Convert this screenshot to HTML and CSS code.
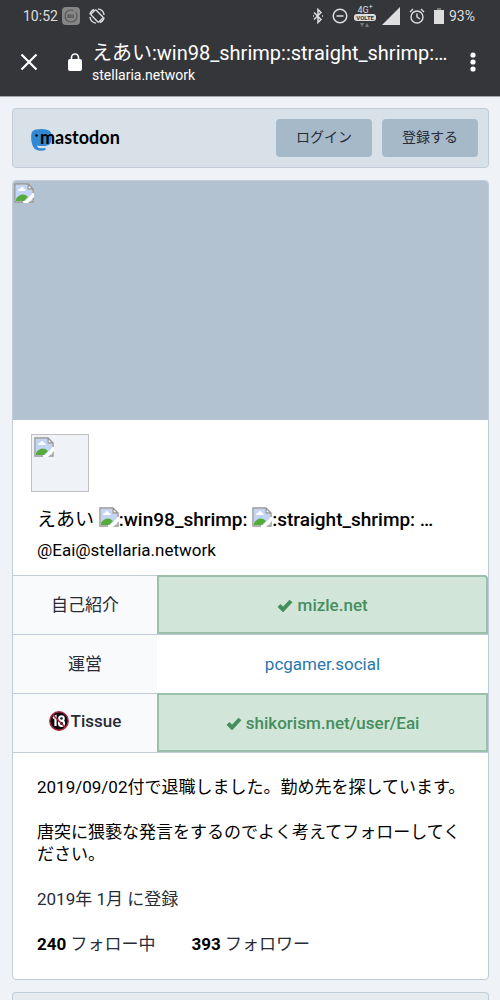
FILE: index.html
```html
<!DOCTYPE html>
<html lang="ja">
<head>
    <meta charset="UTF-8">
    <meta name="viewport" content="width=device-width, initial-scale=1.0">
    <title>えあい (@Eai@stellaria.network)</title>
    <link rel="stylesheet" href="styles.css">
</head>
<body>
    <!-- shared placeholder icon -->
    <svg class="defs" aria-hidden="true">
        <symbol id="broken" viewBox="0 0 20 20">
            <path d="M1 1h13l5 5v13H1z" fill="#fff"/>
            <path d="M2 2h11v5h5v4l-7 7H2z" fill="#c3d5f5"/>
            <path d="M4 8c0-2 2-2 2-2 1-3 4-2 4 0 2 0 2 2 1 2z" fill="#fff"/>
            <path d="M2 18v-2c3-5 8-6 12-2l-4 4z" fill="#55ab3b"/>
            <path d="M15 18l3-3v3z" fill="#c3d5f5"/>
            <path d="M9 19H1V1h13l5 5v4M14 1v5h5M14 19h5v-5" fill="none" stroke="#969696" stroke-width="1.4"/>
            <path d="M9 20L20 10v4l-6 6z" fill="#fff"/>
        </symbol>
        <symbol id="check" viewBox="0 0 16 14">
            <path d="M2 7.5l4 4L14 3" fill="none" stroke="currentColor" stroke-width="4"/>
        </symbol>
    </svg>

    <div class="browser">
        <div class="status">
            <span>10:52</span>
            <svg class="app-icon" width="18" height="18" viewBox="0 0 18 18">
                <rect width="18" height="18" rx="4" fill="#858585"/>
                <circle cx="9" cy="9" r="6" fill="none" stroke="#5a5a5a" stroke-width="1.2" stroke-dasharray="30 3"/>
                <path d="M6 11V8h3v3M7.500 11V9.500M11 7.500V11" fill="none" stroke="#505050" stroke-width="1.2"/>
            </svg>
            <svg class="rotate" width="16" height="16" viewBox="0 0 16 16" fill="none" stroke="#dedede" stroke-width="1.4">
                <rect x="4.500" y="2.500" width="7" height="11" rx="1" transform="rotate(-45 8 8)"/>
                <path d="M9 .9A7.200 7.200 0 0 1 15.100 7M7 15.100A7.200 7.200 0 0 1 .9 9M.9 6.500A7.200 7.200 0 0 1 5 1.500M15.100 9.500a7.200 7.200 0 0 1-4.100 5"/>
            </svg>
            <div class="status-right">
                <svg width="10" height="16" viewBox="0 0 10 16" fill="none" stroke="#dedede" stroke-width="1.500">
                    <path d="M1 4.500l7 7L5 14.500v-13l3 3-7 7"/><path d="M0 8h1M9 8h1"/>
                </svg>
                <svg width="16" height="16" viewBox="0 0 16 16" fill="none" stroke="#dedede" stroke-width="1.500">
                    <circle cx="8" cy="8" r="6.800"/><path d="M4.500 8h7"/>
                </svg>
                <div class="volte">
                    <span class="net">4G<sup>+</sup></span>
                    <span class="pill">VOLTE</span>
                    <svg width="10" height="4" viewBox="0 0 10 4" fill="#777"><path d="M0 0h4L2 4zM5 4h4L7 0z"/></svg>
                </div>
                <svg width="18" height="18" viewBox="0 0 18 18"><path d="M18 0v18H0z" fill="#dedede"/></svg>
                <svg class="alarm" width="16" height="16" viewBox="0 0 16 16" fill="none" stroke="#dedede" stroke-width="1.400">
                    <circle cx="8" cy="9" r="6"/><path d="M8 5.500V9l3 2M1 4l3-3M15 4l-3-3"/>
                </svg>
                <svg width="10" height="16" viewBox="0 0 10 16"><path d="M3 0h4v2H3z" fill="#777"/><path d="M0 2h10v14H0z" fill="#dedede"/></svg>
                <span class="battery">93%</span>
            </div>
        </div>
        <div class="toolbar">
            <button class="icon-btn" aria-label="閉じる">
                <svg width="18" height="18" viewBox="0 0 18 18"><path d="M1.500 1.500l15 15M16.500 1.500l-15 15" stroke="#fff" stroke-width="2.200"/></svg>
            </button>
            <svg class="lock" width="14" height="18" viewBox="0 0 14 18">
                <rect y="6" width="14" height="12" rx="2" fill="#fff"/>
                <path d="M3.500 7V4.500a3.500 3.500 0 0 1 7 0V7" fill="none" stroke="#fff" stroke-width="1.600"/>
            </svg>
            <div class="address">
                <div class="page-title">えあい:win98_shrimp::straight_shrimp:…</div>
                <div class="host">stellaria.network</div>
            </div>
            <button class="icon-btn" aria-label="メニュー">
                <svg width="6" height="20" viewBox="0 0 6 20" fill="#fff"><circle cx="3" cy="3" r="2.600"/><circle cx="3" cy="10" r="2.600"/><circle cx="3" cy="17" r="2.600"/></svg>
            </button>
        </div>
    </div>

    <div class="container">
        <header class="header">
            <a class="brand" href="#">
                <svg width="21" height="22" viewBox="0 0 21 22">
                    <path d="M5 .6C9-.1 13-.1 16 .7c3 .8 4.500 3 4.500 5.300 0 5 0 8-2 9.500-2.500 1.700-7 2-12 1.200 0 2.300 3 3.300 8 2.200v2C10 22.500 4 22 2 17.500 0 13 0 9 .3 5.500.5 2.500 2.500 1 5 .6z" fill="#3088d4"/>
                    <path d="M6 16.500c3 1.600 6 1.400 9 .5-1.500 2-3.500 2-5.500 2S6.200 18.500 6 16.500z" fill="#d9e1e8"/>
                    <circle cx="5.500" cy="6.500" r="1.200" fill="#000"/>
                </svg>
                <span>mastodon</span>
            </a>
            <nav class="nav">
                <a class="nav-button" href="#">ログイン</a>
                <a class="nav-button" href="#">登録する</a>
            </nav>
        </header>

        <main class="card">
            <div class="cover">
                <svg width="20" height="20"><use href="#broken"/></svg>
            </div>
            <div class="profile">
                <div class="avatar">
                    <svg width="20" height="20"><use href="#broken"/></svg>
                </div>
                <h1 class="name"><span>えあい</span> <svg width="20" height="20"><use href="#broken"/></svg>:win98_shrimp: <svg width="20" height="20"><use href="#broken"/></svg>:straight_shrimp: …</h1>
                <div class="handle">@Eai@stellaria.network</div>
            </div>
            <table class="fields">
                <tr>
                    <th scope="row">自己紹介</th>
                    <td class="verified"><a href="#"><svg width="16" height="14"><use href="#check"/></svg> mizle.net</a></td>
                </tr>
                <tr>
                    <th scope="row">運営</th>
                    <td><a href="#">pcgamer.social</a></td>
                </tr>
                <tr>
                    <th scope="row"><span class="adult"><svg width="20" height="20" viewBox="0 0 20 20">
                        <circle cx="10" cy="10" r="9.200" fill="#0b0b0f" stroke="#a8283c" stroke-width="1.400"/>
                        <path d="M4 7l2.500-1.500V15" fill="none" stroke="#fff" stroke-width="2.200"/>
                        <circle cx="12.500" cy="7.500" r="2.300" fill="none" stroke="#fff" stroke-width="2"/>
                        <circle cx="12.500" cy="12.300" r="2.600" fill="none" stroke="#fff" stroke-width="2"/>
                        <path d="M3.500 3.500l13 13" stroke="#a8283c" stroke-width="1.500"/>
                    </svg>Tissue</span></th>
                    <td class="verified"><a href="#"><svg width="16" height="14"><use href="#check"/></svg> shikorism.net/user/Eai</a></td>
                </tr>
            </table>
            <div class="bio">
                <p>2019/09/02付で退職しました。勤め先を探しています。</p>
                <p>唐突に猥褻な発言をするのでよく考えてフォローしてください。</p>
                <p class="joined">2019年 1月 に登録</p>
                <div class="counts">
                    <a href="#"><strong>240</strong> フォロー中</a>
                    <a href="#"><strong>393</strong> フォロワー</a>
                </div>
            </div>
        </main>

        <div class="next-card"></div>
    </div>
</body>
</html>
```

FILE: styles.css
```css
* {
    box-sizing: border-box;
}
body {
    margin: 0;
    background: #eff3f7;
    color: #000;
    font-family: Roboto, "Noto Sans CJK JP", sans-serif;
    font-size: 17px;
    line-height: 22px;
}
a {
    color: inherit;
    text-decoration: none;
}
svg {
    flex: none;
}
.defs {
    position: absolute;
    width: 0;
    height: 0;
}

/* browser bars */
.browser {
    background: #35363a;
    color: #fff;
    border-bottom: 1px solid #a5a6a9;
}
.status {
    display: flex;
    align-items: center;
    height: 32px;
    padding: 0 25px 0 23px;
    color: #dedede;
    font-size: 14px;
}
.app-icon {
    margin-left: 4px;
}
.rotate {
    margin-left: 9px;
}
.status-right {
    display: flex;
    align-items: center;
    gap: 9px;
    margin-left: auto;
}
.volte {
    display: flex;
    flex-direction: column;
    align-items: center;
    margin: 0 -3px;
}
.net {
    font-size: 9px;
    line-height: 8px;
}
.net sup {
    font-size: 7px;
    line-height: 0;
}
.pill {
    margin-bottom: 2px;
    padding: 0 2px;
    border-radius: 3px;
    background: #dedede;
    color: #35363a;
    font-size: 6px;
    font-weight: 700;
    line-height: 7px;
}
.battery {
    margin-left: -4px;
}
.toolbar {
    display: flex;
    align-items: center;
    height: 64px;
    padding: 0 24px 4px 20px;
}
.icon-btn {
    display: flex;
    padding: 0;
    border: none;
    background: none;
}
.lock {
    margin: 0 10px 0 30px;
}
.address {
    flex: 1;
    min-width: 0;
}
.page-title {
    font-size: 20px;
    line-height: 26px;
    white-space: nowrap;
}
.host {
    font-size: 14px;
    line-height: 18px;
}

/* page */
.container {
    padding: 11px 11px 0 12px;
}
.header {
    display: flex;
    align-items: center;
    justify-content: space-between;
    height: 60px;
    padding: 0 10px 0 18px;
    border: 1px solid #c0cdd9;
    border-radius: 4px;
    background: #d9e1e8;
}
.brand {
    display: flex;
    align-items: center;
    font-family: Lato, sans-serif;
    font-size: 18px;
    font-weight: 700;
}
.brand svg {
    margin: 4px -12px 0 0;
}
.brand span {
    position: relative;
    padding-bottom: 2px;
}
.nav {
    display: flex;
    gap: 10px;
}
.nav-button {
    width: 96px;
    padding: 7px 0 9px;
    border-radius: 4px;
    background: #a6b9c9;
    color: #282c37;
    font-size: 14px;
    text-align: center;
}
.card {
    margin-top: 12px;
    border: 1px solid #c0cdd9;
    border-radius: 4px;
    background: #fff;
    overflow: hidden;
}
.cover {
    height: 239px;
    padding: 2px 1px;
    border-bottom: 1px solid #b8c2ca;
    background: #b2c2d1;
}
.profile {
    padding: 14px 18px;
}
.avatar {
    width: 58px;
    height: 58px;
    padding: 2px;
    border: 1px solid #c0c0c0;
    background: #eff3f7;
}
.avatar svg, .cover svg {
    display: block;
}
.name {
    margin: 14px 0 0;
    padding: 0 6px;
    font-size: 19px;
    font-weight: 500;
    line-height: 27px;
    white-space: nowrap;
}
.name span {
    font-weight: 400;
}
.name svg {
    vertical-align: -1px;
}
.handle {
    margin-top: 6px;
    padding: 0 6px;
}
.fields {
    width: 100%;
    border-collapse: separate;
    border-spacing: 0;
    table-layout: fixed;
    border-bottom: 1px solid #c0cdd9;
}
.fields th, .fields td {
    height: 59px;
    padding: 0;
    border-top: 1px solid #c0cdd9;
    font-weight: 400;
    text-align: center;
}
.fields th {
    width: 144px;
    background: #f9fafc;
    color: #282c37;
}
.fields td {
    color: #2b75ad;
}
.fields .verified {
    border: 2px solid #9abfaa;
    background: #d2e5d9;
    color: #458e5e;
    font-weight: 500;
}
.fields tr:first-child .verified {
    border-top-right-radius: 4px;
}
.verified svg {
    vertical-align: -1px;
}
.adult {
    display: inline-flex;
    align-items: center;
    gap: 2px;
    font-weight: 500;
}
.bio {
    padding: 23px 16px 24px 24px;
}
.bio p {
    margin: 0 0 23px;
}
.joined, .counts {
    color: #282c37;
}
.counts {
    display: flex;
    gap: 36px;
}
.counts strong {
    color: #000;
}
.next-card {
    height: 8px;
    margin-top: 12px;
    border: 1px solid #c0cdd9;
    border-bottom: none;
    border-radius: 4px 4px 0 0;
    background: #e6ebf0;
}
```
